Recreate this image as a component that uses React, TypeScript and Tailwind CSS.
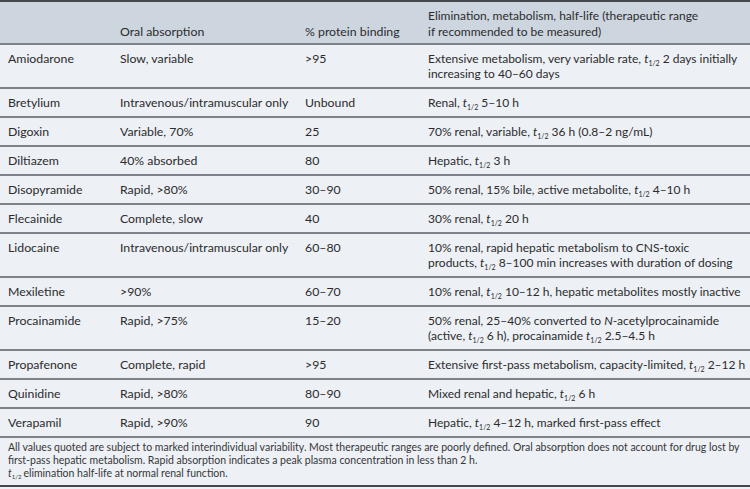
import React from 'react'

const T = () => (
  <>
    <i>t</i>
    <span className="relative top-[3px] text-[7px] leading-none mr-[3px]">1/2</span>
  </>
)

type Row = {
  drug: string
  oral: string
  binding: string
  elim: React.ReactNode
}

const ROWS: Row[] = [
  {
    drug: 'Amiodarone',
    oral: 'Slow, variable',
    binding: '>95',
    elim: (
      <>
        Extensive metabolism, very variable rate, <T />2 days initially
        <br />
        increasing to 40–60 days
      </>
    ),
  },
  { drug: 'Bretylium', oral: 'Intravenous/intramuscular only', binding: 'Unbound', elim: <>Renal, <T />5–10 h</> },
  { drug: 'Digoxin', oral: 'Variable, 70%', binding: '25', elim: <>70% renal, variable, <T />36 h (0.8–2 ng/mL)</> },
  { drug: 'Diltiazem', oral: '40% absorbed', binding: '80', elim: <>Hepatic, <T />3 h</> },
  {
    drug: 'Disopyramide',
    oral: 'Rapid, >80%',
    binding: '30–90',
    elim: <>50% renal, 15% bile, active metabolite, <T />4–10 h</>,
  },
  { drug: 'Flecainide', oral: 'Complete, slow', binding: '40', elim: <>30% renal, <T />20 h</> },
  {
    drug: 'Lidocaine',
    oral: 'Intravenous/intramuscular only',
    binding: '60–80',
    elim: (
      <>
        10% renal, rapid hepatic metabolism to CNS-toxic
        <br />
        products, <T />8–100 min increases with duration of dosing
      </>
    ),
  },
  {
    drug: 'Mexiletine',
    oral: '>90%',
    binding: '60–70',
    elim: <>10% renal, <T />10–12 h, hepatic metabolites mostly inactive</>,
  },
  {
    drug: 'Procainamide',
    oral: 'Rapid, >75%',
    binding: '15–20',
    elim: (
      <>
        50% renal, 25–40% converted to <i>N</i>-acetylprocainamide
        <br />
        (active, <T />6 h), procainamide <T />2.5–4.5 h
      </>
    ),
  },
  {
    drug: 'Propafenone',
    oral: 'Complete, rapid',
    binding: '>95',
    elim: <>Extensive first-pass metabolism, capacity-limited, <T />2–12 h</>,
  },
  { drug: 'Quinidine', oral: 'Rapid, >80%', binding: '80–90', elim: <>Mixed renal and hepatic, <T />6 h</> },
  {
    drug: 'Verapamil',
    oral: 'Rapid, >90%',
    binding: '90',
    elim: <>Hepatic, <T />4–12 h, marked first-pass effect</>,
  },
]

export default function App() {
  return (
    <div
      className="w-[750px] h-[489px] bg-[#edf0f4] text-[#2b2c2e] overflow-hidden"
      style={{ fontFamily: 'Lato, "Open Sans", sans-serif' }}
    >
      <table className="w-full border-collapse text-[12.3px] leading-[15px] table-fixed">
        <colgroup>
          <col className="w-[112px]" />
          <col className="w-[185px]" />
          <col className="w-[123px]" />
          <col />
        </colgroup>
        <thead>
          <tr className="bg-[#cdd5df] border-t-2 border-t-[#43484e] border-b-2 border-b-[#7d828a]">
            <th className="font-normal text-left align-bottom pl-2 pt-[7px] pb-[3px]"></th>
            <th className="font-normal text-left align-bottom pl-2 pt-[7px] pb-[3px] leading-[16px]">Oral absorption</th>
            <th className="font-normal text-left align-bottom pl-2 pt-[7px] pb-[3px] leading-[16px]">% protein binding</th>
            <th className="font-normal text-left align-bottom pl-2 pt-[6px] pb-[3px] leading-[16px] text-[12px]">
              Elimination, metabolism, half-life (therapeutic range
              <br />
              if recommended to be measured)
            </th>
          </tr>
        </thead>
        <tbody>
          {ROWS.map((r) => (
            <tr key={r.drug} className="border-b-2 border-b-[#7d828a]">
              <td className="align-top pl-2 py-[6px]">{r.drug}</td>
              <td className="align-top pl-2 py-[6px]">{r.oral}</td>
              <td className="align-top pl-2 py-[6px]">{r.binding}</td>
              <td className="align-top pl-2 py-[6px] whitespace-nowrap text-[12px]">{r.elim}</td>
            </tr>
          ))}
          <tr className="border-b-2 border-b-[#43484e]">
            <td
              colSpan={4}
              className="px-2 pt-[3px] pb-[5px] text-[10.5px] leading-[13px] text-[#36373a] whitespace-nowrap"
            >
              All values quoted are subject to marked interindividual variability. Most therapeutic ranges are poorly
              defined. Oral absorption does not account for drug lost by
              <br />
              first-pass hepatic metabolism. Rapid absorption indicates a peak plasma concentration in less than 2 h.
              <br />
              <i>t</i>
              <span className="relative top-[2px] text-[6px] leading-none mr-[2px]">1/2</span>
              elimination half-life at normal renal function.
            </td>
          </tr>
        </tbody>
      </table>
    </div>
  )
}
